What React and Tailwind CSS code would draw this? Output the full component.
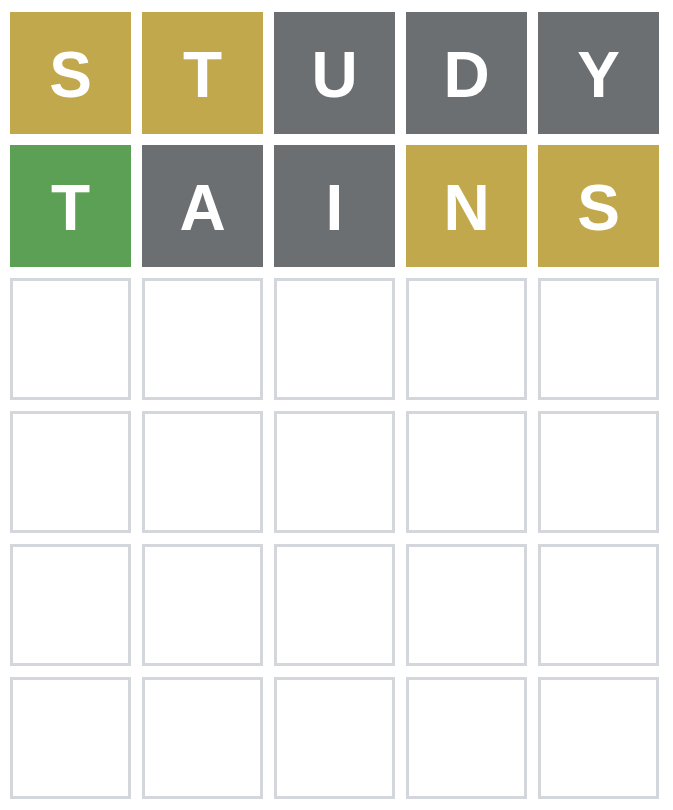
import React from "react";

const rows = [
  [["S", "y"], ["T", "y"], ["U", "g"], ["D", "g"], ["Y", "g"]],
  [["T", "c"], ["A", "g"], ["I", "g"], ["N", "y"], ["S", "y"]],
  [], [], [], [],
];

const tileColor = {
  y: "bg-[#c2a84c]",
  g: "bg-[#6b6f72]",
  c: "bg-[#5ca056]",
};

function Tile({ letter, state }) {
  if (!letter) {
    return <div className="w-[121px] h-[122px] border-[3px] border-[#d3d6da] bg-white" />;
  }
  return (
    <div className={`w-[121px] h-[122px] flex items-center justify-center pt-[4px] text-white font-bold text-[64px] leading-none ${tileColor[state]}`}>
      {letter}
    </div>
  );
}

export default function App() {
  return (
    <div className="w-[673px] h-[810px] bg-white pl-[10px] pt-[12px]" style={{ fontFamily: '"Liberation Sans", Arial, sans-serif' }}>
      <div className="grid grid-cols-[repeat(5,121px)] gap-[11px]">
        {rows.map((row, r) =>
          [0, 1, 2, 3, 4].map((c) => (
            <Tile key={`${r}-${c}`} letter={row[c]?.[0]} state={row[c]?.[1]} />
          ))
        )}
      </div>
    </div>
  );
}
